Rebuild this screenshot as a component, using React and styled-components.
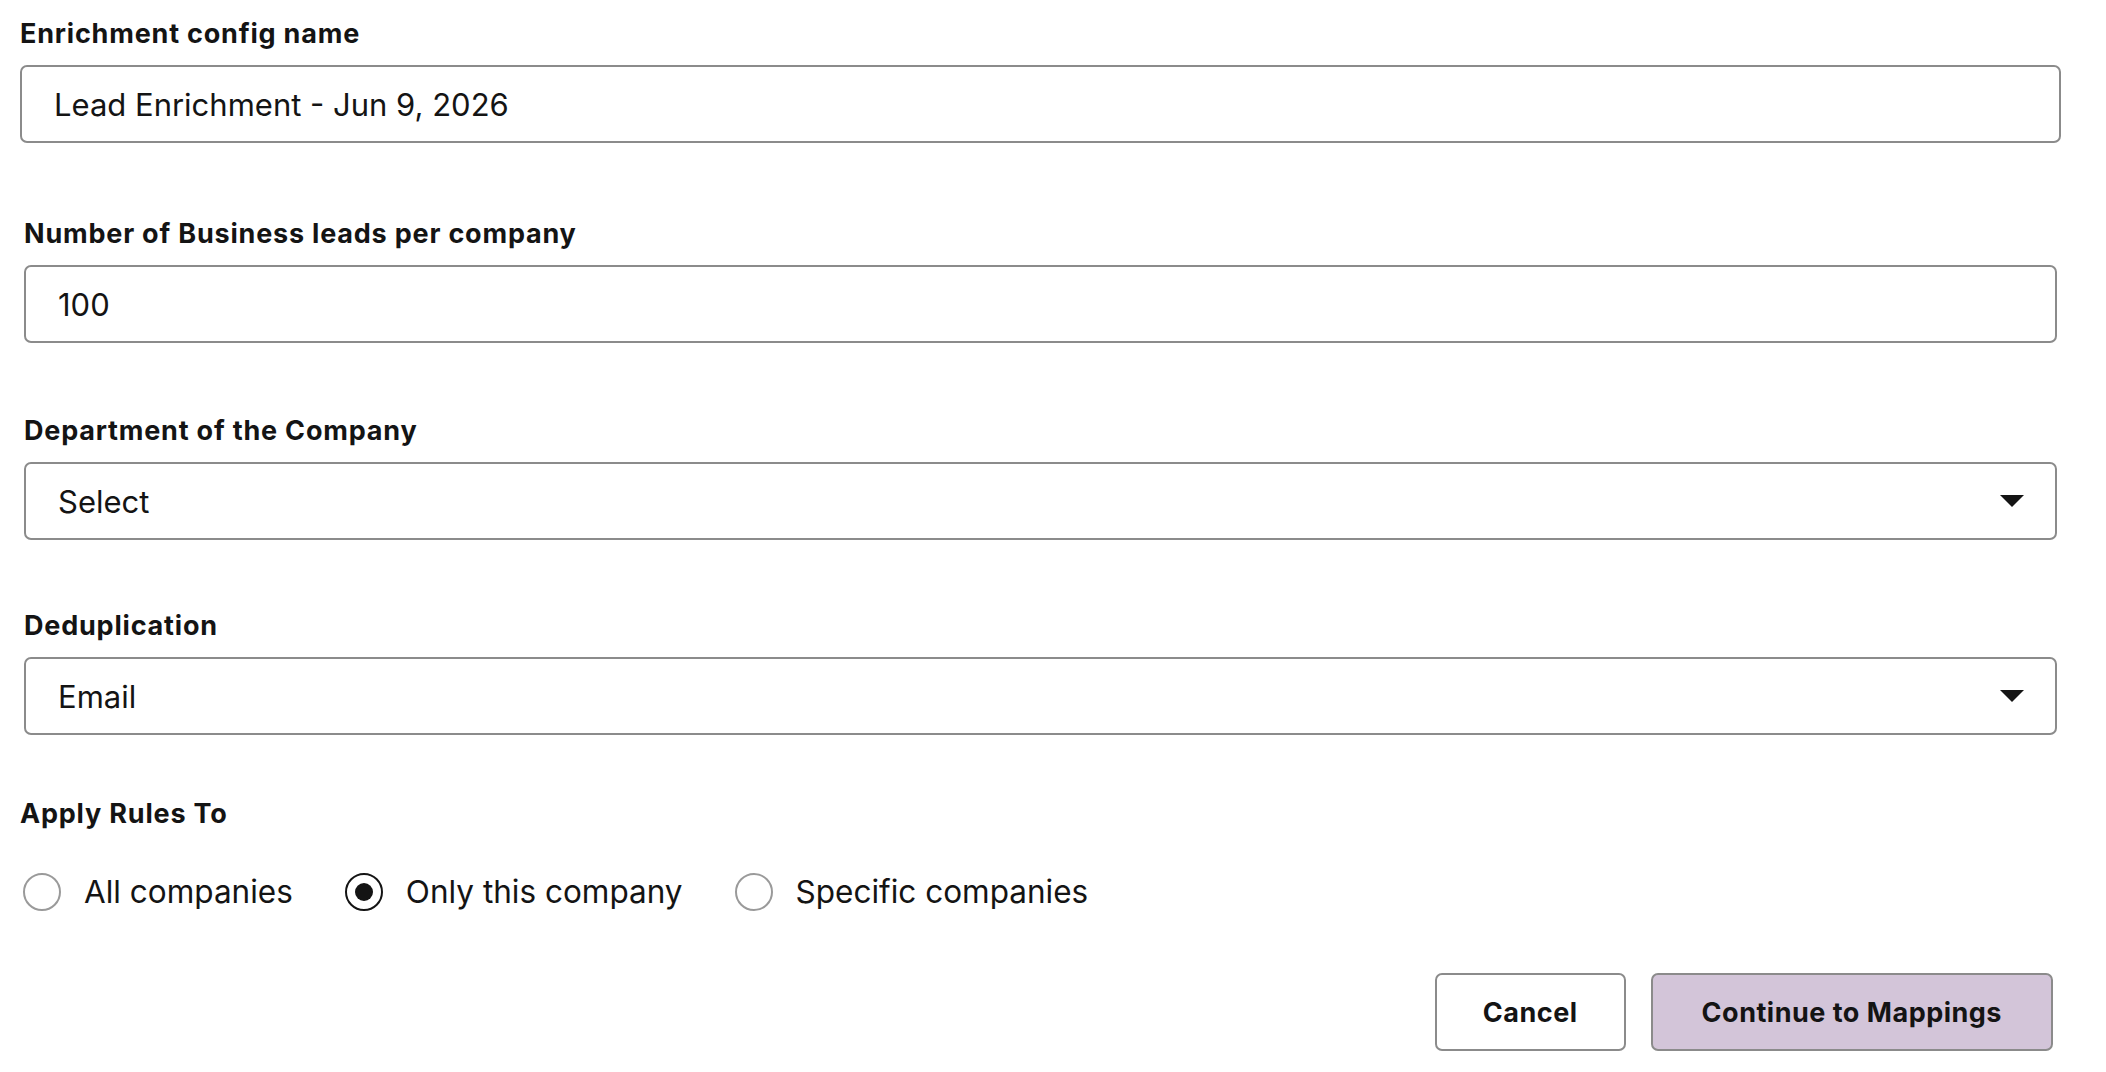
import React, { useState } from "react";
import styled, { createGlobalStyle } from "styled-components";

const GlobalStyle = createGlobalStyle`
  html, body {
    margin: 0;
    padding: 0;
    background: #ffffff;
  }
  body {
    font-family: Inter, "Noto Sans", sans-serif;
    color: #141414;
  }
  * {
    box-sizing: border-box;
  }
`;

const Form = styled.form`
  display: flex;
  flex-direction: column;
  padding: 18px 45px 0 20px;
`;

const Field = styled.div`
  display: flex;
  flex-direction: column;
  margin-top: ${(p) => p.$top || 0}px;
  padding: 0 ${(p) => (p.$inset ? 4 : 0)}px;
`;

const Label = styled.label`
  font-size: 27px;
  font-weight: 700;
  letter-spacing: 0.8px;
  line-height: 32px;
  color: #141414;
  margin-bottom: ${(p) => (p.$flush ? 0 : 15)}px;
`;

const TextInput = styled.input`
  height: 78px;
  width: 100%;
  border: 2px solid #8b8b8b;
  border-radius: 7px;
  padding: 0 32px;
  font-family: inherit;
  font-size: 31px;
  color: #141414;
  background: #fff;
  outline: none;
`;

const SelectBox = styled.div`
  height: 78px;
  display: flex;
  align-items: center;
  justify-content: space-between;
  border: 2px solid #8b8b8b;
  border-radius: 7px;
  padding: 0 31px 0 32px;
  font-size: 31px;
  color: #141414;
  cursor: pointer;

  svg {
    display: block;
  }
`;

const RadioGroup = styled.div`
  display: flex;
  align-items: center;
  gap: 52px;
  margin-top: 43px;
  padding-left: 3px;
`;

const RadioOption = styled.label`
  display: flex;
  align-items: center;
  gap: 23px;
  font-size: 31.5px;
  line-height: 38px;
  color: #141414;
  cursor: pointer;
`;

const RadioDot = styled.span`
  width: 38px;
  height: 38px;
  border-radius: 50%;
  border: 2px solid ${(p) => (p.$checked ? "#141414" : "#9a9a9a")};
  display: flex;
  align-items: center;
  justify-content: center;

  &::after {
    content: "";
    width: 18px;
    height: 18px;
    border-radius: 50%;
    background: #141414;
    display: ${(p) => (p.$checked ? "block" : "none")};
  }
`;

const Actions = styled.div`
  display: flex;
  justify-content: flex-end;
  gap: 25px;
  margin-top: 62px;
  padding-right: 8px;
`;

const Button = styled.button`
  height: 78px;
  padding: 0 ${(p) => (p.$primary ? 49 : 46)}px;
  border: 2px solid #8b8b8b;
  border-radius: 7px;
  background: ${(p) => (p.$primary ? "#d3c5d9" : "#ffffff")};
  font-family: inherit;
  font-size: 27px;
  font-weight: 700;
  letter-spacing: 0.5px;
  color: #141414;
  cursor: pointer;
`;

function Caret() {
  return (
    <svg width="24" height="12" viewBox="0 0 24 12">
      <polygon points="0,0 24,0 12,12" fill="#141414" />
    </svg>
  );
}

const options = ["All companies", "Only this company", "Specific companies"];

export default function App() {
  const [scope, setScope] = useState("Only this company");

  return (
    <>
      <GlobalStyle />
      <Form onSubmit={(e) => e.preventDefault()}>
        <Field>
          <Label>Enrichment config name</Label>
          <TextInput defaultValue="Lead Enrichment - Jun 9, 2026" />
        </Field>

        <Field $top={75} $inset>
          <Label>Number of Business leads per company</Label>
          <TextInput defaultValue="100" />
        </Field>

        <Field $top={72} $inset>
          <Label>Department of the Company</Label>
          <SelectBox>
            <span>Select</span>
            <Caret />
          </SelectBox>
        </Field>

        <Field $top={70} $inset>
          <Label>Deduplication</Label>
          <SelectBox>
            <span>Email</span>
            <Caret />
          </SelectBox>
        </Field>

        <Field $top={63}>
          <Label $flush>Apply Rules To</Label>
        </Field>

        <RadioGroup>
          {options.map((o) => (
            <RadioOption key={o} onClick={() => setScope(o)}>
              <RadioDot $checked={scope === o} />
              {o}
            </RadioOption>
          ))}
        </RadioGroup>

        <Actions>
          <Button type="button">Cancel</Button>
          <Button type="submit" $primary>
            Continue to Mappings
          </Button>
        </Actions>
      </Form>
    </>
  );
}
